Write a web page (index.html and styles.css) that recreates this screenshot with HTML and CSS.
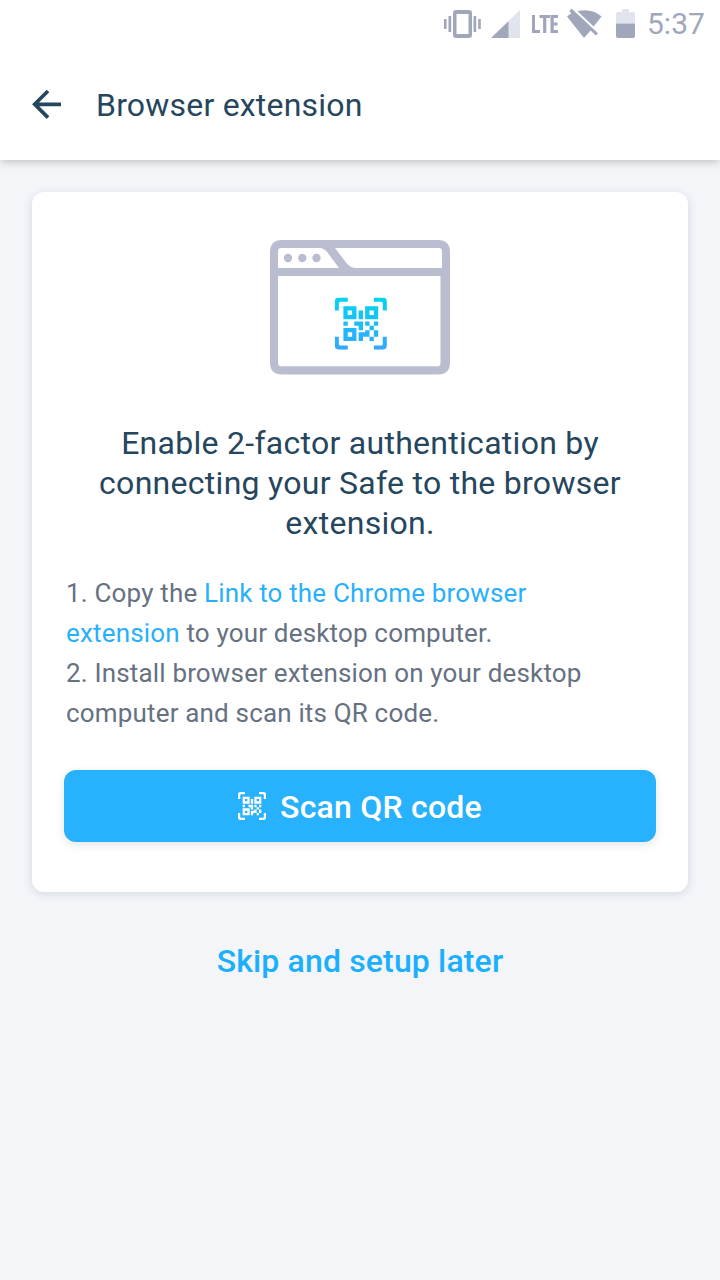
FILE: index.html
```html
<!DOCTYPE html>
<html lang="en">
<head>
<meta charset="utf-8">
<title>Browser extension</title>
<link rel="stylesheet" href="styles.css">
</head>
<body>
<svg class="defs" width="0" height="0" aria-hidden="true">
  <defs>
    <linearGradient id="cyan" gradientUnits="userSpaceOnUse" x1="0" y1="0" x2="0" y2="12">
      <stop offset="0" stop-color="#00d5f0"/>
      <stop offset="1" stop-color="#35a7ff"/>
    </linearGradient>
    <symbol id="qr" viewBox="0 0 12 12">
      <path d="M0 3V1Q0 0 1 0H3V.95H1.3Q.95.95.95 1.3V3ZM9 0h2q1 0 1 1v2h-.95V1.300q0-.35-.35-.35H9ZM12 9v2q0 1-1 1H9v-.95h1.700q.35 0 .35-.35V9ZM3 12H1q-1 0-1-1V9h.95v1.700q0 .35.35.35H3Z"/>
      <path fill-rule="evenodd" d="M2 2h3v3H2ZM3 3v1h1V3ZM7 2h3v3H7ZM8 3v1h1V3ZM2 7h3v3H2ZM3 8v1h1V8Z"/>
      <path d="M5.500 3h1v2h-1ZM2 5.500h1v1H2ZM4.500 5.500h2v2h-1v-1h-1ZM7 5.500h1v1h1v1H8V9H6.500v1h-1V8H7v-.5h1v-1H7ZM9 5.500h1v1H9ZM9 7.500h1V9H9v1H8V9h1Z"/>
    </symbol>
  </defs>
</svg>
<header class="top">
  <div class="status">
    <svg class="status-icons" width="196" height="48" viewBox="440 0 196 48" fill="#a1a7bb">
      <path d="M444 19h2.600v10H444ZM448.500 16h2.700v16h-2.700ZM473.500 16h2.700v16h-2.700ZM478.200 19h2.600v10h-2.600Z"/>
      <path fill-rule="evenodd" d="M456 10h13q3 0 3 3v22q0 3-3 3h-13q-3 0-3-3V13q0-3 3-3ZM456.500 14v20h12V14Z"/>
      <path d="M520 10v28h-29Z" fill="#e1e4ec"/>
      <path d="M508.500 21.300V38H491Z"/>
      <path d="M532 15h3v15h5v3h-8ZM539.500 15h10.500v3h-3.700v15h-3.200V18h-3.600ZM550.500 15h7.500v3h-4.300v4.400h3.800v3h-3.800V30h4.300v3h-7.500Z"/>
      <path d="M571.500 8.500 598 33.200 595.800 35.500 590.600 30.500 584 38 567 16.500Q568.500 15 571.500 13.200L569.400 11.200ZM577.500 11.300Q591 7.500 601.500 16.500L593.700 26.500Z"/>
      <path d="M622 9h7v3h4q2 0 2 2v9.500h-19V14q0-2 2-2h4Z" fill="#e1e4ec"/>
      <path d="M616 23.500h19V36q0 2-2 2h-15q-2 0-2-2Z"/>
    </svg>
    <span class="clock">5:37</span>
  </div>
  <div class="bar">
    <svg class="back" width="32" height="32" viewBox="32 88 32 32" fill="none" stroke="#25465d" stroke-width="3.700"><path d="M48 91 34.700 104.300 48 117.600M34.500 104.300H61"/></svg>
    <h1 class="bar-title">Browser extension</h1>
  </div>
</header>
<main class="content">
  <section class="card">
    <svg class="art" width="180" height="135" viewBox="270 240 180 135">
      <path fill="#b9bdcf" fill-rule="evenodd" d="M282 240h156q12 0 12 12v110.500q0 12-12 12H282q-12 0-12-12V252q0-12 12-12ZM281 248q-3 0-3 3v17h61l-11.500-15.500Q324.300 248 319.500 248ZM335 248l11 14.500Q350.300 268 356.500 268H442V251q0-3-3-3ZM278 276v87q0 3.300 3.300 3.300h156.200q3 0 3-3V276Z"/>
      <g fill="#b9bdcf"><circle cx="288" cy="258" r="4.200"/><circle cx="302.300" cy="258" r="4.200"/><circle cx="316.500" cy="258" r="4.200"/></g>
      <use href="#qr" x="334.700" y="297.500" width="52.200" height="52.200" fill="url(#cyan)"/>
    </svg>
    <h2 class="title">Enable 2-factor authentication by connecting your Safe to the browser extension.</h2>
    <p class="steps">1. Copy the <a class="link">Link to the Chrome browser extension</a> to your desktop computer.<br>2. Install browser extension on your desktop computer and scan its QR code.</p>
    <button class="scan"><svg class="scan-icon" width="28" height="28" fill="#fff"><use href="#qr" width="28" height="28"/></svg><span class="scan-label">Scan QR code</span></button>
  </section>
  <a class="skip">Skip and setup later</a>
</main>
</body>
</html>
```
FILE: styles.css
```css
* { box-sizing: border-box; }
body { margin: 0; height: 1280px; background: #f3f5f9; font-family: Roboto, sans-serif; overflow: hidden; }
.defs { position: absolute; }
.top { height: 160px; background: #fff; box-shadow: 0 3px 8px -1px rgba(0,0,0,.22); }
.status { height: 48px; display: flex; justify-content: flex-end; padding-right: 15px; gap: 11px; }
.clock { width: 58px; white-space: nowrap; font-size: 30px; line-height: 48px; color: #a1a7bb; }
.bar { height: 112px; display: flex; align-items: center; padding-left: 32px; gap: 32px; }
.bar-title { margin: 0; padding-top: 2px; font-size: 32px; line-height: 40px; font-weight: 400; color: #25465d; letter-spacing: .2px; }
.content { display: flex; flex-direction: column; align-items: center; padding: 32px; }
.card { width: 656px; height: 700px; padding: 48px 32px; display: flex; flex-direction: column; align-items: center; background: #fff; border-radius: 12px; box-shadow: 0 2px 10px rgba(40,54,92,.15); }
.art { flex: none; display: block; }
.title { margin: 48px 0 0; width: 592px; text-align: center; font-size: 32px; line-height: 40px; font-weight: 400; color: #25465d; letter-spacing: .28px; }
.steps { margin: 30px 0 0; width: 592px; padding: 0 32px 0 2px; font-size: 26px; line-height: 40px; color: #667182; letter-spacing: .17px; }
.link { color: #28b0fb; }
.scan { margin: 37px 0 0; width: 592px; height: 72px; flex: none; border: 0; border-radius: 12px; background: #28b1fc; color: #fff; display: flex; align-items: center; justify-content: center; gap: 14px; padding: 0; font: 500 32px/40px Roboto, sans-serif; letter-spacing: .22px; box-shadow: 0 3px 10px rgba(40,54,92,.12); }
.scan-icon { flex: none; }
.scan-label { padding-top: 2px; }
.skip { margin-top: 49px; font-size: 32px; line-height: 40px; font-weight: 500; color: #1caffc; letter-spacing: .15px; }
```
